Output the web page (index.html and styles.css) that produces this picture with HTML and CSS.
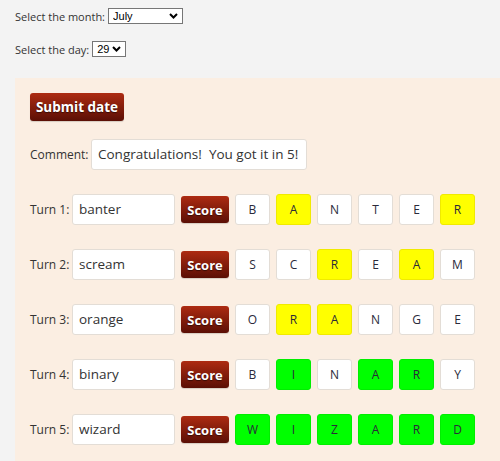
FILE: index.html
```html
<!DOCTYPE html>
<html>
<head>
<meta charset="utf-8">
<link rel="stylesheet" href="styles.css">
</head>
<body>
<div class="page">
  <div class="pick-row pick-month">
    <label class="pick-label">Select the month:</label>
    <select class="pick month-select"><option>July</option></select>
  </div>
  <div class="pick-row pick-day">
    <label class="pick-label">Select the day:</label>
    <select class="pick day-select"><option>29</option></select>
  </div>
  <div class="panel">
    <div class="submit-row"><button class="btn submit-btn">Submit date</button></div>
    <div class="row comment-row">
      <span class="label comment-label">Comment:</span>
      <div class="field comment-field">Congratulations!&nbsp; You got it in 5!</div>
    </div>
    <div class="row turn-row">
      <span class="label turn-label">Turn 1:</span>
      <div class="field turn-field">banter</div>
      <button class="btn score-btn">Score</button>
      <div class="tiles">
        <span class="tile">B</span><span class="tile yellow">A</span><span class="tile">N</span><span class="tile">T</span><span class="tile">E</span><span class="tile yellow">R</span>
      </div>
    </div>
    <div class="row turn-row">
      <span class="label turn-label">Turn 2:</span>
      <div class="field turn-field">scream</div>
      <button class="btn score-btn">Score</button>
      <div class="tiles">
        <span class="tile">S</span><span class="tile">C</span><span class="tile yellow">R</span><span class="tile">E</span><span class="tile yellow">A</span><span class="tile">M</span>
      </div>
    </div>
    <div class="row turn-row">
      <span class="label turn-label">Turn 3:</span>
      <div class="field turn-field">orange</div>
      <button class="btn score-btn">Score</button>
      <div class="tiles">
        <span class="tile">O</span><span class="tile yellow">R</span><span class="tile yellow">A</span><span class="tile">N</span><span class="tile">G</span><span class="tile">E</span>
      </div>
    </div>
    <div class="row turn-row">
      <span class="label turn-label">Turn 4:</span>
      <div class="field turn-field">binary</div>
      <button class="btn score-btn">Score</button>
      <div class="tiles">
        <span class="tile">B</span><span class="tile green">I</span><span class="tile">N</span><span class="tile green">A</span><span class="tile green">R</span><span class="tile">Y</span>
      </div>
    </div>
    <div class="row turn-row">
      <span class="label turn-label">Turn 5:</span>
      <div class="field turn-field">wizard</div>
      <button class="btn score-btn">Score</button>
      <div class="tiles">
        <span class="tile green">W</span><span class="tile green">I</span><span class="tile green">Z</span><span class="tile green">A</span><span class="tile green">R</span><span class="tile green">D</span>
      </div>
    </div>
  </div>
</div>
</body>
</html>
```
FILE: styles.css
```css
html, body {
  margin: 0;
  padding: 0;
  background: #f3f3f3;
  height: 100%;
  overflow: hidden;
}
body {
  font-family: "Open Sans", "Noto Sans", sans-serif;
  color: #333;
}
.page {
  padding: 8px 0 0 15px;
}
.pick-row {
  display: flex;
  align-items: center;
  height: 16px;
  gap: 3px;
}
.pick-day {
  margin-top: 17px;
}
.pick-label {
  font-size: 11px;
  color: #333;
}
.pick {
  -webkit-appearance: none;
  appearance: none;
  height: 16px;
  box-sizing: border-box;
  border: 1px solid #767676;
  border-radius: 0;
  background-color: #fff;
  font-family: "Liberation Sans", Arial, sans-serif;
  font-size: 11px;
  color: #000;
  padding: 0 0 0 4px;
  line-height: 14px;
  background-image: url("data:image/svg+xml;utf8,<svg xmlns='http://www.w3.org/2000/svg' width='9' height='6' viewBox='0 0 9 6'><path d='M1 1 L4.5 4.5 L8 1' fill='none' stroke='black' stroke-width='2'/></svg>");
  background-repeat: no-repeat;
  background-position: right 4px center;
}
.month-select { width: 75px; }
.day-select { width: 34px; }
.panel {
  margin-top: 21px;
  background: #fbeee2;
  padding: 15px 15px 0;
  height: 400px;
}
.submit-row {
  height: 28px;
  display: flex;
}
.btn {
  border: none;
  border-radius: 3px;
  color: #fff;
  font-family: "Open Sans", "Noto Sans", sans-serif;
  font-weight: 700;
  background: linear-gradient(#ad2b12, #5b0f05);
  text-shadow: 0 1px 1px rgba(0,0,0,0.5);
  box-shadow: 0 1px 1px rgba(0,0,0,0.15);
  padding: 0;
  cursor: pointer;
}
.submit-btn {
  width: 94px;
  height: 28px;
  font-size: 13.5px;
}
.row {
  display: flex;
  align-items: center;
  height: 31px;
}
.comment-row {
  margin-top: 18px;
}
.turn-row {
  margin-top: 24px;
}
.label {
  font-size: 12px;
  color: #333;
}
.comment-label { width: 61px; }
.turn-label { width: 42px; }
.field {
  box-sizing: border-box;
  height: 31px;
  background: #fff;
  border: 1px solid #e3ddd6;
  border-radius: 3px;
  font-size: 13.5px;
  line-height: 29px;
  padding: 0 6px;
  color: #333;
  white-space: nowrap;
}
.comment-field { width: 216px; }
.turn-field { width: 103px; }
.score-btn {
  width: 48px;
  height: 27px;
  font-size: 13px;
  margin-left: 6px;
}
.tiles {
  display: flex;
  gap: 6px;
  margin-left: 6px;
}
.tile {
  box-sizing: border-box;
  width: 35px;
  height: 31px;
  border: 1px solid #e3ddd6;
  border-radius: 3px;
  background: #fff;
  font-size: 12px;
  display: flex;
  align-items: center;
  justify-content: center;
  color: #2a2a3a;
}
.tile.yellow {
  background: #ffff00;
  border-color: #f0ea00;
}
.tile.green {
  background: #00ff00;
  border-color: #00ee00;
}
```
